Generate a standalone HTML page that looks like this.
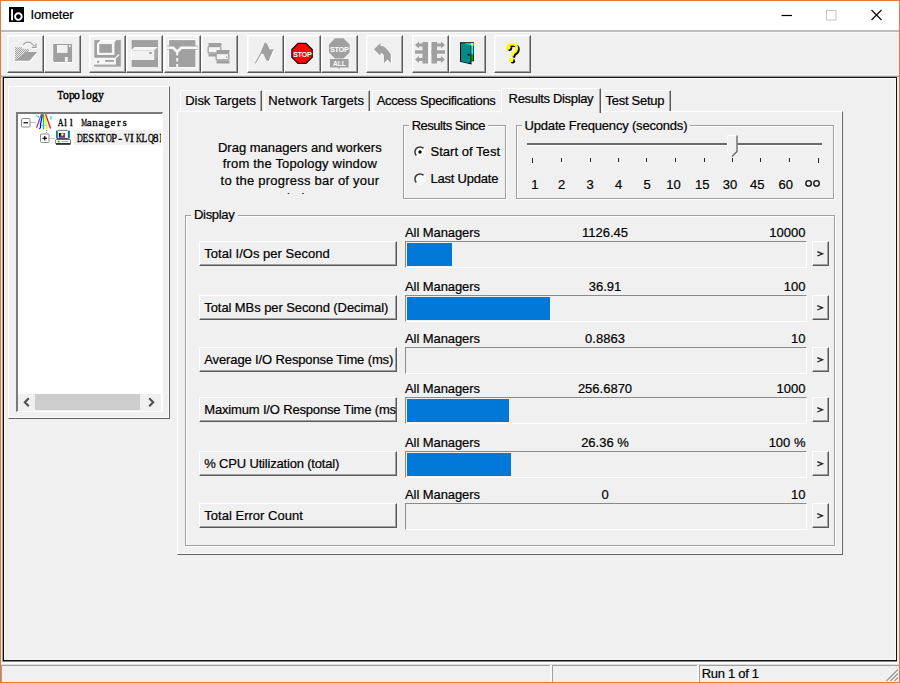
<!DOCTYPE html><html><head><meta charset="utf-8"><style>
html,body{margin:0;padding:0}
body{width:900px;height:683px;position:relative;overflow:hidden;background:#f0f0f0;font-family:"Liberation Sans",sans-serif;color:#000}
div,span,svg{position:absolute}
.t{white-space:nowrap;-webkit-text-stroke:0.2px currentColor}
.m{font-family:"Liberation Mono",monospace;font-size:12px;line-height:12px;white-space:nowrap;transform:scaleX(0.82);transform-origin:0 0;color:#000}
.btn{box-sizing:border-box;border-top:1px solid #fff;border-left:1px solid #fff;border-right:1px solid #5a5a5a;border-bottom:1px solid #5a5a5a;box-shadow:inset -1px -1px 0 #a0a0a0, inset 1px 1px 0 #f8f8f8}
.pb{box-sizing:border-box;border-top:1px solid #fff;border-left:1px solid #fff;border-right:1px solid #5a5a5a;border-bottom:1px solid #5a5a5a;box-shadow:inset -1px -1px 0 #a0a0a0}
.tab{box-sizing:border-box;border-top:1px solid #fff;border-left:1px solid #fff;border-right:1px solid #5a5a5a;box-shadow:inset -1px 0 0 #a8a8a8;background:#f0f0f0;border-top-left-radius:2px;border-top-right-radius:1px}
.tab.nr{border-right:none;box-shadow:none}
</style></head><body><div style="left:0px;top:0px;width:900px;height:683px;background:#e8773d"></div>
<div style="left:1px;top:1px;width:898px;height:681px;background:#f0f0f0"></div>
<div style="left:1px;top:1px;width:898px;height:29px;background:#fff"></div>
<div style="left:1px;top:30px;width:898px;height:2px;background:#bcbcbc"></div>
<div style="left:1px;top:32px;width:898px;height:1px;background:#fbfbfb"></div>
<div style="left:9px;top:7px;width:15px;height:15px;background:#000"></div>
<svg style="left:9px;top:7px" width="15" height="15"><rect x="2.1" y="2.2" width="1.9" height="11.2" fill="#fff"/><circle cx="9.4" cy="9.6" r="3.3" fill="none" stroke="#fff" stroke-width="1.9"/></svg>
<span class="t" style="left:30.50px;top:8.40px;font-size:13px;line-height:13px;letter-spacing:-0.145px;color:#000;">Iometer</span>
<svg style="left:770px;top:0px" width="128" height="30"><line x1="11.5" y1="15.5" x2="22" y2="15.5" stroke="#000" stroke-width="1.2"/><rect x="56.5" y="10.5" width="9.5" height="9.5" fill="none" stroke="#c4c4c4" stroke-width="1"/><line x1="101.5" y1="10" x2="111.5" y2="20" stroke="#111" stroke-width="1.2"/><line x1="111.5" y1="10" x2="101.5" y2="20" stroke="#111" stroke-width="1.2"/></svg>
<div style="left:1px;top:74px;width:898px;height:1px;background:#fdfdfd"></div>
<div style="left:1px;top:75px;width:898px;height:1px;background:#d8d8d8"></div>
<div style="left:1px;top:76px;width:898px;height:1px;background:#a0a0a0"></div>
<div class="btn" style="left:7px;top:35px;width:37px;height:38px"></div>
<svg style="left:7px;top:35px" width="37" height="37"><defs><pattern id="hp" width="2" height="2" patternUnits="userSpaceOnUse"><rect width="2" height="2" fill="#e4e4e4"/><rect width="1" height="1" fill="#a4a4a4"/><rect x="1" y="1" width="1" height="1" fill="#a4a4a4"/></pattern></defs><g transform="translate(1,1)" fill="#fff" stroke="#fff"><polygon stroke="none" points="8,12.2 14.5,12.2 16,14 22,14 22,17 18.4,17 8,25.7"/><polygon stroke="none" points="18.4,17 30.1,17 22.6,25.7 8,25.7"/><polyline fill="none" stroke-width="1.2" points="16.2,9.7 19,7.3 23.3,7.3 27.5,11.1"/><polyline fill="none" stroke-width="1.2" points="29,8.5 29,12.3 24.8,12.3"/></g><polygon points="8,12.2 14.5,12.2 16,14 22,14 22,17 18.4,17 8,25.7" fill="url(#hp)"/><polygon points="18.4,17 30.1,17 22.6,25.7 8,25.7" fill="#a0a0a0"/><polyline fill="none" stroke="#a0a0a0" stroke-width="1.2" points="16.2,9.7 19,7.3 23.3,7.3 27.5,11.1"/><polyline fill="none" stroke="#a0a0a0" stroke-width="1.3" points="29,8.5 29,12.3 24.8,12.3"/></svg>
<div class="btn" style="left:44px;top:35px;width:37px;height:38px"></div>
<svg style="left:44px;top:35px" width="37" height="37"><g transform="translate(1,1)" fill="#fff" stroke="#fff"><polygon stroke="none" points="9.2,8.9 28.2,8.9 28.2,27.1 10.5,27.1 9.2,25.8"/></g><g fill="#a0a0a0" stroke="#a0a0a0"><polygon stroke="none" points="9.2,8.9 28.2,8.9 28.2,27.1 10.5,27.1 9.2,25.8"/></g><rect x="13" y="10" width="10.6" height="7.9" fill="#f2f2f2"/><rect x="20.9" y="22" width="2.9" height="4.8" fill="#f2f2f2"/><rect x="25" y="10.3" width="1.6" height="1.6" fill="#fff"/></svg>
<div class="btn" style="left:89px;top:35px;width:37px;height:38px"></div>
<svg style="left:89px;top:35px" width="37" height="37"><rect x="5.3" y="5.1" width="26.5" height="26.5" fill="#a0a0a0"/><polygon points="8.2,8.5 11.7,5 27.3,5 25.5,7.5 25.5,19.9 8.2,19.9" fill="#f6f6f6"/><polyline points="8.7,19.5 8.7,8.7 11.9,5.5 26.5,5.5" fill="none" stroke="#fff" stroke-width="1"/><rect x="10.3" y="9.1" width="12.6" height="8.7" fill="#a0a0a0"/><path d="M4.4,22.7 H26.9 V31.1 H5.6 L4.4,29.9 Z" fill="#f6f6f6"/><rect x="4.9" y="29.6" width="22" height="1.5" fill="#a8a8a8"/><rect x="8.3" y="25.9" width="1.8" height="1.8" fill="#8a8a8a"/><rect x="16.1" y="25" width="8.9" height="1.8" fill="#a0a0a0"/><line x1="26.5" y1="23" x2="30" y2="19.5" stroke="#fff" stroke-width="1.1"/></svg>
<div class="btn" style="left:126px;top:35px;width:37px;height:38px"></div>
<svg style="left:126px;top:35px" width="37" height="37"><rect x="5.7" y="5.1" width="26.3" height="26.9" fill="#a0a0a0"/><polygon points="5,15.5 8.5,12 32,12 28.5,15.5" fill="#f6f6f6"/><rect x="5" y="15.5" width="23.5" height="9.5" fill="#f2f2f2"/><polygon points="28.5,15.5 32,12 32,22 28.5,25" fill="#a8a8a8"/><line x1="5.5" y1="15.5" x2="5.5" y2="25" stroke="#fff" stroke-width="1"/><rect x="23.3" y="17.2" width="2.4" height="1.5" fill="#8a8a8a"/></svg>
<div class="btn" style="left:164px;top:35px;width:37px;height:38px"></div>
<svg style="left:164px;top:35px" width="37" height="37"><rect x="4.3" y="4.3" width="28" height="28.5" fill="#fff"/><rect x="5.1" y="5.1" width="26.3" height="26.9" fill="#a0a0a0"/><path d="M3,12.7 H9 L13.2,16.8 L17.3,12.7 H33.5" fill="none" stroke="#a8a8a8" stroke-width="4.2"/><path d="M3,12.7 H9 L13.2,16.8 L17.3,12.7 H33.5" fill="none" stroke="#f6f6f6" stroke-width="2.6"/><path d="M13.2,17 V34" fill="none" stroke="#f6f6f6" stroke-width="2" stroke-dasharray="3.5,2.5"/></svg>
<div class="btn" style="left:201px;top:35px;width:37px;height:38px"></div>
<svg style="left:201px;top:35px" width="37" height="37"><g transform="translate(6.5,8)"><rect x="1" y="0" width="13" height="3" fill="#a0a0a0"/><rect x="0" y="3" width="14" height="7.5" rx="1.5" fill="#a0a0a0"/><rect x="1.3" y="4.2" width="11.4" height="5" fill="#f4f4f4"/><rect x="1" y="10.5" width="13" height="3" fill="#a0a0a0"/></g><g transform="translate(14.5,15)"><rect x="1" y="0" width="13" height="3" fill="#a0a0a0"/><rect x="0" y="3" width="14" height="7.5" rx="1.5" fill="#a0a0a0"/><rect x="1.3" y="4.2" width="11.4" height="5" fill="#f4f4f4"/><rect x="1" y="10.5" width="13" height="3" fill="#a0a0a0"/></g><rect x="25" y="21.5" width="1.2" height="1.2" fill="#888"/></svg>
<div class="btn" style="left:247px;top:35px;width:37px;height:38px"></div>
<svg style="left:247px;top:35px" width="37" height="37"><g transform="translate(1,1)" fill="#fff" stroke="#fff"><line x1="8.3" y1="28.3" x2="14.8" y2="17" stroke-width="1.1"/><polygon stroke="none" points="13.5,18 17.8,7.5 20,8.8 22.8,14.5 26.6,14.3 21.8,25.8 19.6,25.8 16.5,19 14.5,18.5"/></g><g fill="#a0a0a0" stroke="#a0a0a0"><line x1="8.3" y1="28.3" x2="14.8" y2="17" stroke-width="1.1"/><polygon stroke="none" points="13.5,18 17.8,7.5 20,8.8 22.8,14.5 26.6,14.3 21.8,25.8 19.6,25.8 16.5,19 14.5,18.5"/></g></svg>
<div class="btn" style="left:284px;top:35px;width:37px;height:38px"></div>
<svg style="left:284px;top:35px" width="37" height="37"><polygon points="14,8.3 22,8.3 28.2,14.5 28.2,22.3 22,28.4 14,28.4 7.9,22.3 7.9,14.5" fill="#ff0000" stroke="#101010" stroke-width="1.3"/><text x="18.2" y="21.9" text-anchor="middle" font-family="Liberation Sans" font-weight="bold" font-size="7.4" fill="#fff" letter-spacing="-0.35">STOP</text></svg>
<div class="btn" style="left:321px;top:35px;width:37px;height:38px"></div>
<svg style="left:321px;top:35px" width="37" height="37"><polygon points="14,3.3 22.5,3.3 28.6,9.4 28.6,17.6 22.5,23.6 14,23.6 8,17.6 8,9.4" fill="#a0a0a0"/><rect x="9" y="24" width="18.6" height="8.5" fill="#a0a0a0"/><rect x="17" y="32.5" width="2" height="1" fill="#a0a0a0"/><text x="18.3" y="16.9" text-anchor="middle" font-family="Liberation Sans" font-weight="bold" font-size="7.4" fill="#fff" letter-spacing="-0.35">STOP</text><text x="18.3" y="30.9" text-anchor="middle" font-family="Liberation Sans" font-weight="bold" font-size="6.6" fill="#fff">ALL</text></svg>
<div class="btn" style="left:366px;top:35px;width:37px;height:38px"></div>
<svg style="left:366px;top:35px" width="37" height="37"><g transform="translate(1,1)" fill="#fff" stroke="#fff"><polygon stroke="none" points="8,14.3 14.5,8 14.5,11 18,11.5 22.5,16 24.8,19.5 24.8,28 21.5,24.5 18,28 18,20.5 16.5,18.5 14.5,18 14.5,20.7"/></g><g fill="#a0a0a0" stroke="#a0a0a0"><polygon stroke="none" points="8,14.3 14.5,8 14.5,11 18,11.5 22.5,16 24.8,19.5 24.8,28 21.5,24.5 18,28 18,20.5 16.5,18.5 14.5,18 14.5,20.7"/></g></svg>
<div class="btn" style="left:412px;top:35px;width:37px;height:38px"></div>
<svg style="left:412px;top:35px" width="37" height="37"><rect x="10.5" y="7" width="5.5" height="21.5" fill="#a0a0a0"/><rect x="19.5" y="7" width="5.5" height="21.5" fill="#a0a0a0"/><rect x="3" y="15.3" width="13" height="3.4" fill="#a0a0a0"/><rect x="19.5" y="15.3" width="13.5" height="3.4" fill="#a0a0a0"/><rect x="17" y="7" width="1.5" height="22" fill="#fff"/><polygon points="3,10 7,6.5 7,8.5 11,8.5 11,11.5 7,11.5 7,13.5" fill="#a0a0a0"/><polygon points="3,24.5 7,21 7,23 11,23 11,26 7,26 7,28" fill="#a0a0a0"/><polygon points="33,10 29,6.5 29,8.5 25,8.5 25,11.5 29,11.5 29,13.5" fill="#a0a0a0"/><polygon points="33,24.5 29,21 29,23 25,23 25,26 29,26 29,28" fill="#a0a0a0"/></svg>
<div class="btn" style="left:449px;top:35px;width:37px;height:38px"></div>
<svg style="left:449px;top:35px" width="37" height="37"><polygon points="11,7.3 25,7.3 25,26.3 22.5,26.3 22.5,29.5 11,26.8" fill="#000"/><polygon points="15.5,8.2 23,8.2 23,10.5 21.5,10.5 17.5,9.6" fill="#00ffff"/><rect x="22.3" y="8.2" width="2" height="11.5" fill="#00ffff"/><rect x="22.3" y="19.7" width="2" height="6" fill="#00b000"/><rect x="22" y="8" width="2.5" height="2.8" fill="#ffff00"/><polygon points="12,8.3 15.5,8.3 21.5,10.3 21.5,28.3 19.5,27.8 18,28 16.5,27.3 14.5,27 12,26.2" fill="#008b8b"/><circle cx="19.6" cy="19.8" r="1.05" fill="#000"/></svg>
<div class="btn" style="left:494px;top:35px;width:37px;height:38px"></div>
<svg style="left:494px;top:35px" width="37" height="37"><g transform="translate(1.6,1.3)"><circle cx="14.2" cy="12.3" r="2.4" fill="#000"/><path d="M14,11 Q15.5,9.2 18.8,9.3 Q23.2,9.8 22.8,13.8 Q22.3,16.8 18.8,18.6 L18.2,21.3" fill="none" stroke="#000" stroke-width="2.6"/><circle cx="17.2" cy="24.9" r="2.3" fill="#000"/></g><circle cx="14.2" cy="12.3" r="2.4" fill="#ffff00"/><path d="M14,11 Q15.5,9.2 18.8,9.3 Q23.2,9.8 22.8,13.8 Q22.3,16.8 18.8,18.6 L18.2,21.3" fill="none" stroke="#ffff00" stroke-width="2.6"/><circle cx="17.2" cy="24.9" r="2.3" fill="#ffff00"/></svg>
<div style="left:2px;top:76px;width:896px;height:1px;background:#a0a0a0"></div>
<div style="left:2px;top:76px;width:1px;height:586px;background:#a0a0a0"></div>
<div style="left:3px;top:77px;width:894px;height:584px;box-sizing:border-box;border:1px solid #101010;background:#f0f0f0"></div>
<div style="left:4px;top:78px;width:892px;height:1px;background:#fff"></div>
<div style="left:4px;top:78px;width:1px;height:582px;background:#fff"></div>
<div style="left:895px;top:78px;width:1px;height:582px;background:#fafafa"></div>
<div style="left:4px;top:659px;width:892px;height:1px;background:#fafafa"></div>
<div style="left:3px;top:661px;width:894px;height:1px;background:#8a8a8a"></div>
<div style="left:8px;top:86px;width:162px;height:333px;box-sizing:border-box;border-top:1px solid #fff;border-left:1px solid #fff;border-right:1px solid #646464;border-bottom:1px solid #646464;box-shadow:inset -1px -1px 0 #fcfcfc"></div>
<div style="left:0;top:0;font-family:'Liberation Serif',serif;font-size:12px;line-height:12px;font-weight:normal;white-space:nowrap;-webkit-text-stroke:0.45px #000;"><span style="left:56.60px;top:88.65px;width:5.95px;text-align:center;transform:scaleX(0.795);">T</span><span style="left:62.55px;top:88.65px;width:5.95px;text-align:center;transform:scaleX(0.972);">o</span><span style="left:68.50px;top:88.65px;width:5.95px;text-align:center;transform:scaleX(0.972);">p</span><span style="left:74.45px;top:88.65px;width:5.95px;text-align:center;transform:scaleX(0.972);">o</span><span style="left:80.40px;top:88.65px;width:5.95px;text-align:center;">l</span><span style="left:86.35px;top:88.65px;width:5.95px;text-align:center;transform:scaleX(0.972);">o</span><span style="left:92.30px;top:88.65px;width:5.95px;text-align:center;transform:scaleX(0.972);">g</span><span style="left:98.25px;top:88.65px;width:5.95px;text-align:center;transform:scaleX(0.972);">y</span></div>
<div style="left:16px;top:112px;width:147px;height:300px;box-sizing:border-box;border-top:2px solid #7a7a7a;border-left:2px solid #7a7a7a;border-right:1px solid #fff;border-bottom:1px solid #fff;background:#fff"></div>
<svg style="left:18px;top:114px" width="143" height="30"><rect x="3.5" y="4.5" width="8.5" height="8.5" fill="#fff" stroke="#8a8a8a" stroke-width="1" rx="1"/><line x1="5.5" y1="8.75" x2="10" y2="8.75" stroke="#000" stroke-width="1.2"/><line x1="12.5" y1="8.5" x2="18.5" y2="8.5" stroke="#888" stroke-width="1" stroke-dasharray="1,1"/><line x1="28.5" y1="16" x2="28.5" y2="20" stroke="#999" stroke-width="1" stroke-dasharray="1,1"/><line x1="18.5" y1="13.8" x2="23.5" y2="0.3" stroke="#9b30b0" stroke-width="1.2"/><polyline points="21.4,15 22.5,13.5 22.5,10 24,3.5 24.3,0.3" fill="none" stroke="#0000ff" stroke-width="1.2"/><line x1="25.5" y1="0.3" x2="25.5" y2="15.5" stroke="#00e000" stroke-width="1.2"/><line x1="26.4" y1="0.3" x2="29.3" y2="15" stroke="#ffee00" stroke-width="1.2"/><line x1="27.6" y1="0.3" x2="32.6" y2="14.5" stroke="#ff0000" stroke-width="1.2"/><line x1="23" y1="11.3" x2="28" y2="11.3" stroke="#00e0ff" stroke-width="1"/><polyline points="18,1.5 20,2.5 21,3.5" fill="none" stroke="#00e0ff" stroke-width="1.1"/><polyline points="32.5,2 33.3,3.5 32.5,5.5" fill="none" stroke="#00e0ff" stroke-width="1.1"/><rect x="22.5" y="20" width="8.5" height="8.5" fill="#fff" stroke="#8a8a8a" stroke-width="1" rx="1"/><line x1="24.5" y1="24.25" x2="29" y2="24.25" stroke="#000" stroke-width="1.2"/><line x1="26.75" y1="22" x2="26.75" y2="26.5" stroke="#000" stroke-width="1.2"/><line x1="31.5" y1="24.5" x2="37" y2="24.5" stroke="#888" stroke-width="1" stroke-dasharray="1,1"/></svg>
<svg style="left:52px;top:128px" width="22" height="20"><rect x="4" y="2.6" width="2" height="7.7" fill="#008080"/><rect x="15.5" y="2.6" width="2.4" height="7.7" fill="#008080"/><rect x="6" y="1.8" width="9.5" height="1.4" fill="#8a8a8a"/><rect x="5.8" y="3.1" width="10" height="7.3" fill="#f6f6f6"/><rect x="6.9" y="5" width="6.2" height="4.8" fill="#4848c8"/><rect x="6.9" y="5" width="1.6" height="3.6" fill="#000"/><rect x="8.5" y="6.5" width="1.5" height="2.2" fill="#9020a0"/><circle cx="10.4" cy="6.6" r="1.3" fill="#ffff00"/><circle cx="12" cy="8" r="1.1" fill="#ff0000"/><rect x="5" y="10.2" width="11.5" height="1.3" fill="#202020"/><rect x="3.6" y="11.5" width="15" height="4.5" rx="0.8" fill="#fbfbfb" stroke="#404040" stroke-width="0.7"/><rect x="4" y="15" width="14.4" height="1.8" fill="#303030"/><rect x="6" y="12.8" width="1.6" height="1.6" fill="#00a000"/><rect x="10" y="13.2" width="6" height="0.8" fill="#a0a0a0"/></svg>
<div style="left:0;top:0;font-family:'Liberation Serif',serif;font-size:11px;line-height:11px;font-weight:normal;white-space:nowrap;-webkit-text-stroke:0.3px #000;"><span style="left:56.60px;top:116.70px;width:5.92px;text-align:center;transform:scaleX(0.730);">A</span><span style="left:62.52px;top:116.70px;width:5.92px;text-align:center;">l</span><span style="left:68.44px;top:116.70px;width:5.92px;text-align:center;">l</span><span style="left:80.28px;top:116.70px;width:5.92px;text-align:center;transform:scaleX(0.593);">M</span><span style="left:86.20px;top:116.70px;width:5.92px;text-align:center;">a</span><span style="left:92.12px;top:116.70px;width:5.92px;text-align:center;">n</span><span style="left:98.04px;top:116.70px;width:5.92px;text-align:center;">a</span><span style="left:103.96px;top:116.70px;width:5.92px;text-align:center;">g</span><span style="left:109.88px;top:116.70px;width:5.92px;text-align:center;">e</span><span style="left:115.80px;top:116.70px;width:5.92px;text-align:center;">r</span><span style="left:121.72px;top:116.70px;width:5.92px;text-align:center;">s</span></div>
<div style="left:74px;top:130px;width:87px;height:15px;background:#f0f0f0"></div>
<div style="left:74px;top:130px;width:87px;height:15px;overflow:hidden">
<div style="left:0;top:0;font-family:'Liberation Serif',serif;font-size:11.5px;line-height:11.5px;font-weight:normal;white-space:nowrap;-webkit-text-stroke:0.3px #000;"><span style="left:1.80px;top:2.98px;width:5.92px;text-align:center;transform:scaleX(0.699);">D</span><span style="left:7.72px;top:2.98px;width:5.92px;text-align:center;transform:scaleX(0.826);">E</span><span style="left:13.64px;top:2.98px;width:5.92px;text-align:center;transform:scaleX(0.907);">S</span><span style="left:19.56px;top:2.98px;width:5.92px;text-align:center;transform:scaleX(0.699);">K</span><span style="left:25.48px;top:2.98px;width:5.92px;text-align:center;transform:scaleX(0.826);">T</span><span style="left:31.40px;top:2.98px;width:5.92px;text-align:center;transform:scaleX(0.699);">O</span><span style="left:37.32px;top:2.98px;width:5.92px;text-align:center;transform:scaleX(0.907);">P</span><span style="left:43.24px;top:2.98px;width:5.92px;text-align:center;">-</span><span style="left:49.16px;top:2.98px;width:5.92px;text-align:center;transform:scaleX(0.699);">V</span><span style="left:55.08px;top:2.98px;width:5.92px;text-align:center;">I</span><span style="left:61.00px;top:2.98px;width:5.92px;text-align:center;transform:scaleX(0.699);">K</span><span style="left:66.92px;top:2.98px;width:5.92px;text-align:center;transform:scaleX(0.826);">L</span><span style="left:72.84px;top:2.98px;width:5.92px;text-align:center;transform:scaleX(0.699);">Q</span><span style="left:78.76px;top:2.98px;width:5.92px;text-align:center;">8</span><span style="left:84.68px;top:2.98px;width:5.92px;text-align:center;transform:scaleX(0.826);">E</span></div>
</div>
<div style="left:18px;top:394px;width:143px;height:17px;background:#f0f0f0"></div>
<div style="left:35px;top:394px;width:105px;height:16px;background:#cdcdcd"></div>
<svg style="left:18px;top:394px" width="143" height="17"><polyline points="10.8,4.3 6.8,8.3 10.8,12.3" fill="none" stroke="#505050" stroke-width="2.1"/><polyline points="131.2,4.3 135.2,8.3 131.2,12.3" fill="none" stroke="#505050" stroke-width="2.1"/></svg>
<div style="left:177px;top:111px;width:666px;height:444px;box-sizing:border-box;border-top:1px solid #fff;border-left:1px solid #fff;border-right:1px solid #646464;border-bottom:1px solid #646464;box-shadow:inset -1px -1px 0 #fcfcfc"></div>
<div class="tab" style="left:180px;top:90px;width:82px;height:21px"></div>
<span class="t" style="left:185.20px;top:93.80px;font-size:13px;line-height:13px;letter-spacing:-0.037px;color:#000;">Disk Targets</span>
<div class="tab" style="left:264px;top:90px;width:106px;height:21px"></div>
<span class="t" style="left:268.30px;top:93.80px;font-size:13px;line-height:13px;letter-spacing:0.152px;color:#000;">Network Targets</span>
<div class="tab nr" style="left:372px;top:90px;width:129px;height:21px"></div>
<span class="t" style="left:376.70px;top:93.80px;font-size:13px;line-height:13px;letter-spacing:-0.330px;color:#000;">Access Specifications</span>
<div class="tab" style="left:602px;top:90px;width:69px;height:21px"></div>
<span class="t" style="left:605.60px;top:93.80px;font-size:13px;line-height:13px;letter-spacing:-0.292px;color:#000;">Test Setup</span>
<div class="tab sel" style="left:501px;top:88px;width:100px;height:25px"></div>
<span class="t" style="left:508.60px;top:92.00px;font-size:13px;line-height:13px;letter-spacing:-0.326px;color:#000;">Results Display</span>
<span class="t" style="left:218.00px;top:140.70px;font-size:13px;line-height:13px;letter-spacing:-0.016px;color:#000;">Drag managers and workers</span>
<span class="t" style="left:222.80px;top:157.10px;font-size:13px;line-height:13px;letter-spacing:0.170px;color:#000;">from the Topology window</span>
<span class="t" style="left:220.55px;top:173.50px;font-size:13px;line-height:13px;letter-spacing:0.231px;color:#000;">to the progress bar of your</span>
<div style="left:200px;top:191px;width:200px;height:3px;overflow:hidden;position:absolute">
<span class="t" style="left:80.50px;top:-0.50px;font-size:13px;line-height:13px;letter-spacing:0.000px;color:#000;">choice.</span>
</div>
<div style="left:403px;top:125px;width:103px;height:74px;box-sizing:border-box;border:1px solid #a0a0a0;box-shadow:1px 1px 0 #fff, inset 1px 1px 0 #fff"></div>
<div style="left:408.7px;top:123px;width:79.7px;height:5px;background:#f0f0f0"></div>
<span class="t" style="left:411.70px;top:118.50px;font-size:13px;line-height:13px;letter-spacing:-0.483px;color:#000;">Results Since</span>
<div style="left:516px;top:125px;width:318px;height:74px;box-sizing:border-box;border:1px solid #a0a0a0;box-shadow:1px 1px 0 #fff, inset 1px 1px 0 #fff"></div>
<div style="left:521.6px;top:123px;width:168.9px;height:5px;background:#f0f0f0"></div>
<span class="t" style="left:524.60px;top:118.50px;font-size:13px;line-height:13px;letter-spacing:-0.189px;color:#000;">Update Frequency (seconds)</span>
<svg style="left:413.5px;top:146.2px" width="12" height="12"><path d="M2.4,9.6 A5,5 0 0 1 9.6,2.4" fill="none" stroke="#3a3a3a" stroke-width="1.5"/><path d="M9.8,2.2 A5.3,5.3 0 0 1 2.2,9.8" fill="none" stroke="#fff" stroke-width="1"/><circle cx="6" cy="6" r="3.6" fill="#fff"/><circle cx="6" cy="6" r="1.7" fill="#000"/></svg>
<svg style="left:413.5px;top:172.7px" width="12" height="12"><path d="M2.4,9.6 A5,5 0 0 1 9.6,2.4" fill="none" stroke="#3a3a3a" stroke-width="1.5"/><path d="M9.8,2.2 A5.3,5.3 0 0 1 2.2,9.8" fill="none" stroke="#fff" stroke-width="1"/><circle cx="6" cy="6" r="3.6" fill="#fff"/></svg>
<span class="t" style="left:430.50px;top:144.90px;font-size:13px;line-height:13px;letter-spacing:0.034px;color:#000;">Start of Test</span>
<span class="t" style="left:430.50px;top:171.60px;font-size:13px;line-height:13px;letter-spacing:-0.213px;color:#000;">Last Update</span>
<div style="left:527px;top:143px;width:295px;height:2px;background:#6a6a6a"></div>
<div style="left:527px;top:145px;width:295px;height:1px;background:#fff"></div>
<svg style="left:726px;top:134px" width="14" height="24"><polygon points="1.5,1.5 11,1.5 11,17.5 6,22.5 1.5,18" fill="#f0f0f0" stroke="#fff" stroke-width="1"/><polyline points="11,1.5 11,17.5 6,22.5" fill="none" stroke="#696969" stroke-width="1.4"/></svg>
<div style="left:532px;top:158px;width:1px;height:5px;background:#202020"></div>
<div style="left:561px;top:158px;width:1px;height:4px;background:#202020"></div>
<div style="left:590px;top:158px;width:1px;height:4px;background:#202020"></div>
<div style="left:618px;top:158px;width:1px;height:4px;background:#202020"></div>
<div style="left:646px;top:158px;width:1px;height:4px;background:#202020"></div>
<div style="left:675px;top:158px;width:1px;height:4px;background:#202020"></div>
<div style="left:704px;top:158px;width:1px;height:4px;background:#202020"></div>
<div style="left:732px;top:158px;width:1px;height:4px;background:#202020"></div>
<div style="left:760px;top:158px;width:1px;height:4px;background:#202020"></div>
<div style="left:789px;top:158px;width:1px;height:4px;background:#202020"></div>
<div style="left:818px;top:158px;width:1px;height:5px;background:#202020"></div>
<span class="t" style="left:531.19px;top:177.60px;font-size:13px;line-height:13px;letter-spacing:0.000px;color:#000;">1</span>
<span class="t" style="left:557.89px;top:177.60px;font-size:13px;line-height:13px;letter-spacing:0.000px;color:#000;">2</span>
<span class="t" style="left:586.39px;top:177.60px;font-size:13px;line-height:13px;letter-spacing:0.000px;color:#000;">3</span>
<span class="t" style="left:614.89px;top:177.60px;font-size:13px;line-height:13px;letter-spacing:0.000px;color:#000;">4</span>
<span class="t" style="left:643.39px;top:177.60px;font-size:13px;line-height:13px;letter-spacing:0.000px;color:#000;">5</span>
<span class="t" style="left:666.28px;top:177.60px;font-size:13px;line-height:13px;letter-spacing:0.000px;color:#000;">10</span>
<span class="t" style="left:695.08px;top:177.60px;font-size:13px;line-height:13px;letter-spacing:0.000px;color:#000;">15</span>
<span class="t" style="left:722.68px;top:177.60px;font-size:13px;line-height:13px;letter-spacing:0.000px;color:#000;">30</span>
<span class="t" style="left:750.08px;top:177.60px;font-size:13px;line-height:13px;letter-spacing:0.000px;color:#000;">45</span>
<span class="t" style="left:778.58px;top:177.60px;font-size:13px;line-height:13px;letter-spacing:0.000px;color:#000;">60</span>
<svg style="left:800px;top:175px" width="24" height="16"><circle cx="8.6" cy="8.4" r="2.75" fill="none" stroke="#111" stroke-width="1.35"/><circle cx="16.5" cy="8.4" r="2.75" fill="none" stroke="#111" stroke-width="1.35"/></svg>
<div style="left:185px;top:215px;width:650px;height:331px;box-sizing:border-box;border:1px solid #a0a0a0;box-shadow:1px 1px 0 #fff, inset 1px 1px 0 #fff"></div>
<div style="left:191px;top:208px;width:47px;height:12px;background:#f0f0f0"></div>
<span class="t" style="left:194.00px;top:208.40px;font-size:13px;line-height:13px;letter-spacing:-0.307px;color:#000;">Display</span>
<div class="pb" style="left:199px;top:241px;width:198px;height:25px;overflow:hidden">
<span class="t" style="left:4.30px;top:5.40px;font-size:13px;line-height:13px;letter-spacing:0.025px;color:#000;">Total I/Os per Second</span>
</div>
<div style="left:405px;top:241px;width:402px;height:27px;box-sizing:border-box;border-top:1px solid #8a8a8a;border-left:1px solid #8a8a8a;border-bottom:1px solid #fff;border-right:1px solid #fff"></div>
<div style="left:407px;top:243px;width:45px;height:23px;background:#0078d7"></div>
<span class="t" style="left:405.00px;top:225.50px;font-size:13px;line-height:13px;letter-spacing:-0.078px;color:#000;">All Managers</span>
<span class="t" style="left:581.99px;top:225.50px;font-size:13px;line-height:13px;letter-spacing:0.000px;color:#000;">1126.45</span>
<span class="t" style="left:769.36px;top:225.50px;font-size:13px;line-height:13px;letter-spacing:0.000px;color:#000;">10000</span>
<div class="pb" style="left:812px;top:241px;width:17px;height:25px"></div>
<svg style="left:812px;top:241px" width="17" height="25"><polyline points="5.3,10.6 10.5,12.8 5.3,15" fill="none" stroke="#202020" stroke-width="1.3"/></svg>
<div class="pb" style="left:199px;top:295px;width:198px;height:25px;overflow:hidden">
<span class="t" style="left:4.30px;top:5.40px;font-size:13px;line-height:13px;letter-spacing:-0.083px;color:#000;">Total MBs per Second (Decimal)</span>
</div>
<div style="left:405px;top:295px;width:402px;height:27px;box-sizing:border-box;border-top:1px solid #8a8a8a;border-left:1px solid #8a8a8a;border-bottom:1px solid #fff;border-right:1px solid #fff"></div>
<div style="left:407px;top:297px;width:143px;height:23px;background:#0078d7"></div>
<span class="t" style="left:405.00px;top:279.50px;font-size:13px;line-height:13px;letter-spacing:-0.078px;color:#000;">All Managers</span>
<span class="t" style="left:588.72px;top:279.50px;font-size:13px;line-height:13px;letter-spacing:0.000px;color:#000;">36.91</span>
<span class="t" style="left:783.79px;top:279.50px;font-size:13px;line-height:13px;letter-spacing:0.000px;color:#000;">100</span>
<div class="pb" style="left:812px;top:295px;width:17px;height:25px"></div>
<svg style="left:812px;top:295px" width="17" height="25"><polyline points="5.3,10.6 10.5,12.8 5.3,15" fill="none" stroke="#202020" stroke-width="1.3"/></svg>
<div class="pb" style="left:199px;top:347px;width:198px;height:25px;overflow:hidden">
<span class="t" style="left:4.30px;top:5.40px;font-size:13px;line-height:13px;letter-spacing:-0.126px;color:#000;">Average I/O Response Time (ms)</span>
</div>
<div style="left:405px;top:347px;width:402px;height:27px;box-sizing:border-box;border-top:1px solid #8a8a8a;border-left:1px solid #8a8a8a;border-bottom:1px solid #fff;border-right:1px solid #fff"></div>
<span class="t" style="left:405.00px;top:331.50px;font-size:13px;line-height:13px;letter-spacing:-0.078px;color:#000;">All Managers</span>
<span class="t" style="left:585.11px;top:331.50px;font-size:13px;line-height:13px;letter-spacing:0.000px;color:#000;">0.8863</span>
<span class="t" style="left:791.07px;top:331.50px;font-size:13px;line-height:13px;letter-spacing:0.000px;color:#000;">10</span>
<div class="pb" style="left:812px;top:347px;width:17px;height:25px"></div>
<svg style="left:812px;top:347px" width="17" height="25"><polyline points="5.3,10.6 10.5,12.8 5.3,15" fill="none" stroke="#202020" stroke-width="1.3"/></svg>
<div class="pb" style="left:199px;top:397px;width:198px;height:25px;overflow:hidden">
<span class="t" style="left:4.30px;top:5.40px;font-size:13px;line-height:13px;letter-spacing:-0.167px;color:#000;">Maximum I/O Response Time (ms)</span>
</div>
<div style="left:405px;top:397px;width:402px;height:27px;box-sizing:border-box;border-top:1px solid #8a8a8a;border-left:1px solid #8a8a8a;border-bottom:1px solid #fff;border-right:1px solid #fff"></div>
<div style="left:407px;top:399px;width:102px;height:23px;background:#0078d7"></div>
<span class="t" style="left:405.00px;top:381.50px;font-size:13px;line-height:13px;letter-spacing:-0.078px;color:#000;">All Managers</span>
<span class="t" style="left:577.89px;top:381.50px;font-size:13px;line-height:13px;letter-spacing:0.000px;color:#000;">256.6870</span>
<span class="t" style="left:776.58px;top:381.50px;font-size:13px;line-height:13px;letter-spacing:0.000px;color:#000;">1000</span>
<div class="pb" style="left:812px;top:397px;width:17px;height:25px"></div>
<svg style="left:812px;top:397px" width="17" height="25"><polyline points="5.3,10.6 10.5,12.8 5.3,15" fill="none" stroke="#202020" stroke-width="1.3"/></svg>
<div class="pb" style="left:199px;top:451px;width:198px;height:25px;overflow:hidden">
<span class="t" style="left:4.30px;top:5.40px;font-size:13px;line-height:13px;letter-spacing:-0.184px;color:#000;">% CPU Utilization (total)</span>
</div>
<div style="left:405px;top:451px;width:402px;height:27px;box-sizing:border-box;border-top:1px solid #8a8a8a;border-left:1px solid #8a8a8a;border-bottom:1px solid #fff;border-right:1px solid #fff"></div>
<div style="left:407px;top:453px;width:104px;height:23px;background:#0078d7"></div>
<span class="t" style="left:405.00px;top:435.50px;font-size:13px;line-height:13px;letter-spacing:-0.078px;color:#000;">All Managers</span>
<span class="t" style="left:581.14px;top:435.50px;font-size:13px;line-height:13px;letter-spacing:0.000px;color:#000;">26.36 %</span>
<span class="t" style="left:768.64px;top:435.50px;font-size:13px;line-height:13px;letter-spacing:0.000px;color:#000;">100 %</span>
<div class="pb" style="left:812px;top:451px;width:17px;height:25px"></div>
<svg style="left:812px;top:451px" width="17" height="25"><polyline points="5.3,10.6 10.5,12.8 5.3,15" fill="none" stroke="#202020" stroke-width="1.3"/></svg>
<div class="pb" style="left:199px;top:503px;width:198px;height:25px;overflow:hidden">
<span class="t" style="left:4.30px;top:5.40px;font-size:13px;line-height:13px;letter-spacing:0.014px;color:#000;">Total Error Count</span>
</div>
<div style="left:405px;top:503px;width:402px;height:27px;box-sizing:border-box;border-top:1px solid #8a8a8a;border-left:1px solid #8a8a8a;border-bottom:1px solid #fff;border-right:1px solid #fff"></div>
<span class="t" style="left:405.00px;top:487.50px;font-size:13px;line-height:13px;letter-spacing:-0.078px;color:#000;">All Managers</span>
<span class="t" style="left:601.39px;top:487.50px;font-size:13px;line-height:13px;letter-spacing:0.000px;color:#000;">0</span>
<span class="t" style="left:791.07px;top:487.50px;font-size:13px;line-height:13px;letter-spacing:0.000px;color:#000;">10</span>
<div class="pb" style="left:812px;top:503px;width:17px;height:25px"></div>
<svg style="left:812px;top:503px" width="17" height="25"><polyline points="5.3,10.6 10.5,12.8 5.3,15" fill="none" stroke="#202020" stroke-width="1.3"/></svg>
<div style="left:1px;top:662px;width:898px;height:2px;background:#fcfcfc"></div>
<div style="left:1px;top:664px;width:898px;height:1px;background:#dcdcdc"></div>
<div style="left:1px;top:665px;width:898px;height:1px;background:#a0a0a0"></div>
<div style="left:550px;top:665px;width:2px;height:17px;background:#fafafa"></div>
<div style="left:552px;top:665px;width:1px;height:17px;background:#a0a0a0"></div>
<div style="left:697px;top:665px;width:2px;height:17px;background:#fafafa"></div>
<div style="left:699px;top:665px;width:1px;height:17px;background:#a0a0a0"></div>
<div style="left:1px;top:665px;width:1px;height:17px;background:#a0a0a0"></div>
<span class="t" style="left:701.70px;top:666.80px;font-size:13px;line-height:13px;letter-spacing:-0.299px;color:#000;">Run 1 of 1</span>
<svg style="left:880px;top:666px" width="19" height="16"><line x1="7.5" y1="15.5" x2="18.5" y2="4.5" stroke="#fff" stroke-width="1"/><line x1="6.5" y1="15" x2="18" y2="3.5" stroke="#999" stroke-width="1.4"/><line x1="11.5" y1="15.5" x2="18.5" y2="8.5" stroke="#fff" stroke-width="1"/><line x1="10.5" y1="15" x2="18" y2="7.5" stroke="#999" stroke-width="1.4"/><line x1="15.5" y1="15.5" x2="18.5" y2="12.5" stroke="#fff" stroke-width="1"/><line x1="14.5" y1="15" x2="18" y2="11.5" stroke="#999" stroke-width="1.4"/></svg></body></html>
